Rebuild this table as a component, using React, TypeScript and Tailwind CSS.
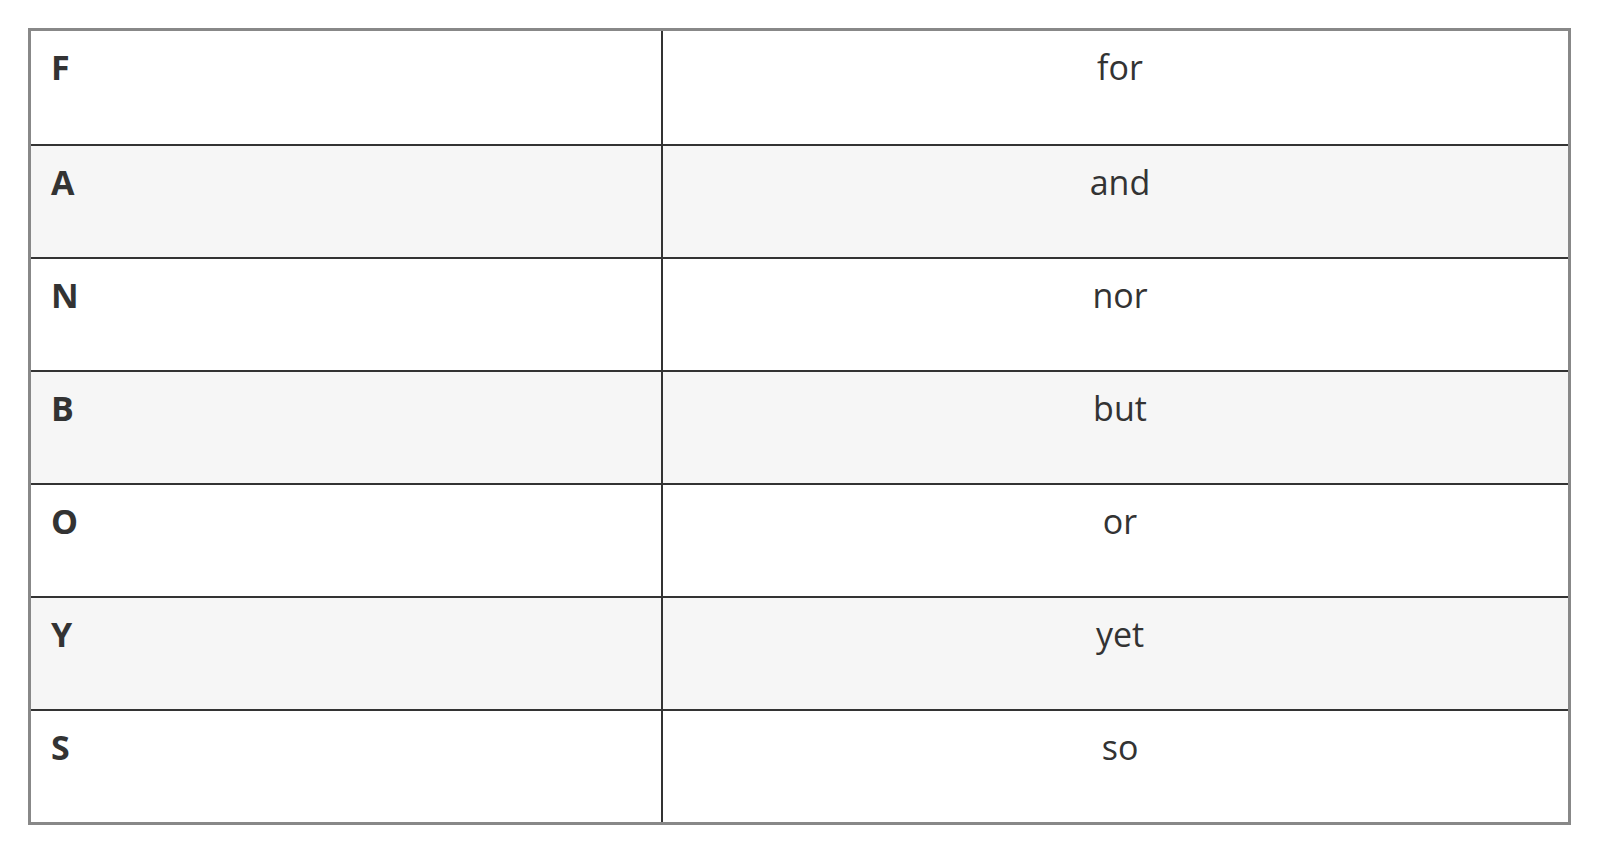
const rows = [
  { letter: 'F', word: 'for' },
  { letter: 'A', word: 'and' },
  { letter: 'N', word: 'nor' },
  { letter: 'B', word: 'but' },
  { letter: 'O', word: 'or' },
  { letter: 'Y', word: 'yet' },
  { letter: 'S', word: 'so' },
]

const App = () => {
  return (
    <div className="min-h-screen bg-white p-[28px] font-['Open_Sans',sans-serif] text-[#333333]">
      <div className="w-[1543px] border-[3px] border-[#888888]">
        {rows.map((row, i) => (
          <div
            key={row.letter}
            className={`flex h-[113px] ${i > 0 ? 'border-t-2 border-[#333333]' : ''} ${
              i % 2 === 1 ? 'bg-[#f6f6f6]' : 'bg-white'
            }`}
          >
            <div className="w-[632px] shrink-0 border-r-2 border-[#333333] pl-[20px] pt-[11px] text-[34px] leading-[1.5] font-bold">
              {row.letter}
            </div>
            <div className="flex-1 pl-[20px] pr-[11px] pt-[11px] text-center text-[34px] leading-[1.5]">
              {row.word}
            </div>
          </div>
        ))}
      </div>
    </div>
  )
}

export default App
